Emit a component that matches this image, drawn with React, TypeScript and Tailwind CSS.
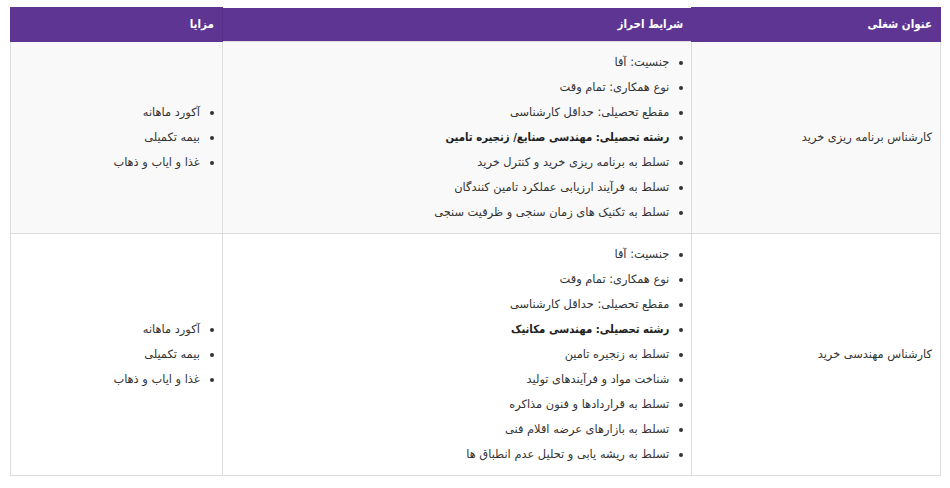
import React from "react";

type Row = { title: string; reqs: { text: string; bold?: boolean }[]; perks: string[] };

const rows: Row[] = [
  {
    title: "کارشناس برنامه ریزی خرید",
    reqs: [
      { text: "جنسیت: آقا" },
      { text: "نوع همکاری: تمام وقت" },
      { text: "مقطع تحصیلی: حداقل کارشناسی" },
      { text: "رشته تحصیلی: مهندسی صنایع/ زنجیره تامین", bold: true },
      { text: "تسلط به برنامه ریزی خرید و کنترل خرید" },
      { text: "تسلط به فرآیند ارزیابی عملکرد تامین کنندگان" },
      { text: "تسلط به تکنیک های زمان سنجی و ظرفیت سنجی" },
    ],
    perks: ["آکورد ماهانه", "بیمه تکمیلی", "غذا و ایاب و ذهاب"],
  },
  {
    title: "کارشناس مهندسی خرید",
    reqs: [
      { text: "جنسیت: آقا" },
      { text: "نوع همکاری: تمام وقت" },
      { text: "مقطع تحصیلی: حداقل کارشناسی" },
      { text: "رشته تحصیلی: مهندسی مکانیک", bold: true },
      { text: "تسلط به زنجیره تامین" },
      { text: "شناخت مواد و فرآیندهای تولید" },
      { text: "تسلط به قراردادها و فنون مذاکره" },
      { text: "تسلط به بازارهای عرضه اقلام فنی" },
      { text: "تسلط به ریشه یابی و تحلیل عدم انطباق ها" },
    ],
    perks: ["آکورد ماهانه", "بیمه تکمیلی", "غذا و ایاب و ذهاب"],
  },
];

const boldFont = { fontFamily: '"DejaVu Sans Condensed", "DejaVu Sans", sans-serif' };

function Item({ text, bold }: { text: string; bold?: boolean }) {
  return (
    <li className="flex items-center gap-[10px] leading-[25px]">
      <span className="w-[4px] h-[4px] rounded-full bg-[#333] shrink-0" />
      {bold ? (
        <span className="font-bold text-[#222] text-[11.3px]" style={boldFont}>
          {text}
        </span>
      ) : (
        <span>{text}</span>
      )}
    </li>
  );
}

export default function App() {
  return (
    <div
      dir="rtl"
      className="w-[950px] h-[488px] bg-white pt-[7px] pr-[9px] pl-[10px]"
      style={{ fontFamily: '"DejaVu Sans", sans-serif' }}
    >
      <table className="w-[931px] border-collapse text-[11.4px] text-[#333]">
        <thead>
          <tr className="bg-[#5e3593] text-white h-[34px] text-[11.5px]" style={boldFont}>
            <th className="w-[249px] text-right font-bold px-[8px] border border-[#5e3593]">عنوان شغلی</th>
            <th className="w-[470px] text-right font-bold px-[8px] border-x border-[#553089]">شرایط احراز</th>
            <th className="w-[212px] text-right font-bold px-[8px] border border-[#5e3593]">مزایا</th>
          </tr>
        </thead>
        <tbody>
          {rows.map((r, i) => (
            <tr key={i} className={i === 0 ? "bg-[#f9f9f9]" : "bg-white"}>
              <td className="border border-[#dddddd] px-[8px] align-middle">{r.title}</td>
              <td className="border border-[#dddddd] pr-[8px] pl-[8px] py-[8px] align-middle">
                <ul>
                  {r.reqs.map((q, j) => (
                    <Item key={j} text={q.text} bold={q.bold} />
                  ))}
                </ul>
              </td>
              <td className="border border-[#dddddd] pr-[8px] pl-[8px] align-middle">
                <ul>
                  {r.perks.map((p, j) => (
                    <Item key={j} text={p} />
                  ))}
                </ul>
              </td>
            </tr>
          ))}
        </tbody>
      </table>
    </div>
  );
}
